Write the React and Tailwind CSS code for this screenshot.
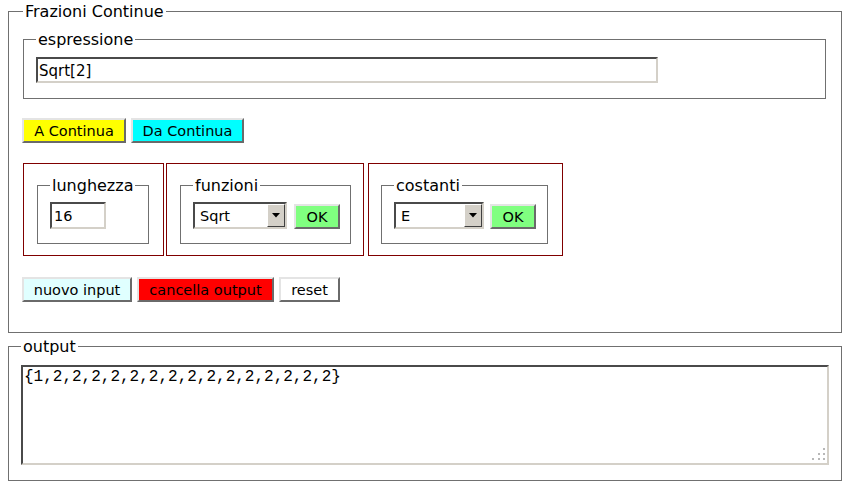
const raised =
  'border-2 border-t-[#e4e4e4] border-l-[#e4e4e4] border-b-[#6a6a6a] border-r-[#6a6a6a]'
const sunken =
  'border-2 border-t-[#4a4a4a] border-l-[#4a4a4a] border-b-[#d4d0c8] border-r-[#d4d0c8]'

function Btn({ className, children }) {
  return (
    <button
      className={`${raised} flex h-[25px] items-center justify-center pt-px text-[14.5px] leading-none text-black ${className}`}
    >
      {children}
    </button>
  )
}

function Select({ value, width }) {
  return (
    <div className={`${sunken} flex h-[27px] items-stretch bg-white ${width}`}>
      <span className="flex-1 pl-[5px] pt-px text-[14.5px] leading-[23px]">{value}</span>
      <span className="flex w-[18px] items-center justify-center border border-t-white border-l-white border-b-[#404040] border-r-[#404040] bg-[#d4d0c8]">
        <svg width="8" height="5" viewBox="0 0 8 5">
          <path d="M0 0h8L4 4.5z" fill="#000" />
        </svg>
      </span>
    </div>
  )
}

function Legend({ children }) {
  return (
    <legend className="px-0.5 text-base leading-5">
      <span className="relative top-px">{children}</span>
    </legend>
  )
}

export default function App() {
  const output = '{1,' + Array(15).fill('2').join(',') + '}'

  return (
    <div className="min-h-screen bg-white pl-2 pr-[7px] pt-px font-['DejaVu_Sans',sans-serif] text-black">
      {/* main panel */}
      <fieldset className="border border-[#707070] pl-[14px] pr-[15px] pt-2 pb-[30px]">
        <Legend>Frazioni Continue</Legend>

        <fieldset className="border border-[#707070] pl-3 pt-2 pb-[15px]">
          <Legend>espressione</Legend>
          <input
            readOnly
            value="Sqrt[2]"
            className={`${sunken} block h-[26px] w-[622px] bg-white pl-px pt-px text-[15px] outline-none`}
          />
        </fieldset>

        <div className="mt-[19px] -ml-px flex gap-[5px]">
          <Btn className="w-[104px] bg-[#ffff00]">A Continua</Btn>
          <Btn className="w-[113px] bg-[#00ffff]">Da Continua</Btn>
        </div>

        <div className="mt-5 flex">
          <div className="w-[141px] border border-[#800000] pl-[13px] pt-[11px] pb-[11px]">
            <fieldset className="w-[112px] border border-[#707070] pl-3 pt-[7px] pb-[14px]">
              <Legend>lunghezza</Legend>
              <input
                readOnly
                value="16"
                className={`${sunken} block h-[27px] w-[56px] bg-white pl-[2px] pt-px text-[14.5px] outline-none`}
              />
            </fieldset>
          </div>

          <div className="ml-[2px] w-[198px] border border-[#800000] pl-[13px] pt-[11px] pb-[11px]">
            <fieldset className="w-[171px] border border-[#707070] pl-3 pt-[7px] pb-[14px]">
              <Legend>funzioni</Legend>
              <div className="flex items-end">
                <Select value="Sqrt" width="w-[94px]" />
                <Btn className="ml-[7px] w-[46px] bg-[#80ff80]">OK</Btn>
              </div>
            </fieldset>
          </div>

          <div className="ml-[4px] w-[195px] border border-[#800000] pl-3 pt-[11px] pb-[11px]">
            <fieldset className="w-[167px] border border-[#707070] pl-3 pt-[7px] pb-[14px]">
              <Legend>costanti</Legend>
              <div className="flex items-end">
                <Select value="E" width="w-[90px]" />
                <Btn className="ml-[6px] w-[46px] bg-[#80ff80]">OK</Btn>
              </div>
            </fieldset>
          </div>
        </div>

        <div className="mt-[21px] -ml-px flex">
          <Btn className="w-[110px] bg-[#e0ffff]">nuovo input</Btn>
          <Btn className="ml-[5px] w-[137px] bg-[#ff0000]">cancella output</Btn>
          <Btn className="ml-[5px] w-[61px] bg-white">reset</Btn>
        </div>
      </fieldset>

      {/* output panel */}
      <fieldset className="mt-[3px] border border-[#707070] pl-3 pr-3 pt-[9px] pb-[15px]">
        <Legend>output</Legend>
        <div className="relative">
          <textarea
            readOnly
            value={output}
            className={`${sunken} block h-[100px] w-full resize-none bg-white pl-px pt-px font-['Liberation_Mono',monospace] text-base leading-[18px] outline-none`}
          />
          <svg className="absolute right-[4px] bottom-[4px]" width="13" height="13" viewBox="0 0 13 13">
            <g fill="#b8b8b8">
              <rect x="11" y="0" width="2" height="2" />
              <rect x="6" y="5" width="2" height="2" />
              <rect x="11" y="5" width="2" height="2" />
              <rect x="0" y="10" width="2" height="2" />
              <rect x="6" y="10" width="2" height="2" />
              <rect x="11" y="10" width="2" height="2" />
            </g>
          </svg>
        </div>
      </fieldset>
    </div>
  )
}
